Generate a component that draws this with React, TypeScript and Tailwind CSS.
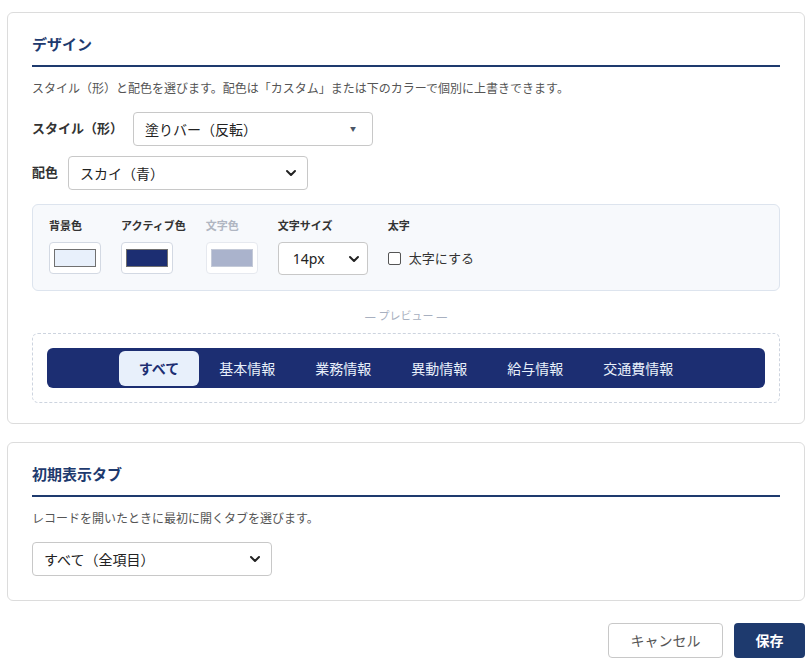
import { ChevronDown } from "lucide-react";

const tabs = ["すべて", "基本情報", "業務情報", "異動情報", "給与情報", "交通費情報"];

const swatches = [
  { label: "背景色", color: "bg-[#e8f0fb]", disabled: false },
  { label: "アクティブ色", color: "bg-[#1c2e72]", disabled: false },
  { label: "文字色", color: "bg-[#aab3cc]", disabled: true },
];

const SectionTitle = ({ children }: { children: string }) => (
  <h2 className="border-b-2 border-[#1e3a6e] pb-[9px] text-[15px] leading-6 font-bold text-[#1e3a6e]">
    {children}
  </h2>
);

const Select = ({
  value,
  width,
  arrow = "chevron",
}: {
  value: string;
  width: string;
  arrow?: "chevron" | "triangle";
}) => (
  <div
    className={`${width} flex h-[34px] items-center justify-between rounded-[4px] border border-[#c8c8c8] bg-white pl-[11px] pr-[8px] text-[14px] text-[#222]`}
  >
    <span>{value}</span>
    {arrow === "chevron" ? (
      <ChevronDown size={16} strokeWidth={3} className="text-[#222]" />
    ) : (
      <span className="mr-[8px] text-[6px] text-[#4a5566]">▼</span>
    )}
  </div>
);

export default function App() {
  return (
    <div
      className="min-h-screen bg-white px-[7px] pt-[12px] text-[#333]"
      style={{ fontFamily: '"Noto Sans", "Noto Sans CJK JP", sans-serif' }}
    >
      <section className="rounded-md border border-[#dcdcdc] px-6 pt-[19px] pb-5">
        <SectionTitle>デザイン</SectionTitle>
        <p className="mt-[13px] text-[12px] leading-[18px] text-[#555]">
          スタイル（形）と配色を選びます。配色は「カスタム」または下のカラーで個別に上書きできます。
        </p>

        <div className="mt-[14px] flex items-center gap-2.5">
          <span className="text-[13px] font-bold">スタイル（形）</span>
          <Select value="塗りバー（反転）" width="w-[240px]" arrow="triangle" />
        </div>
        <div className="mt-[10px] flex items-center gap-2.5">
          <span className="text-[13px] font-bold">配色</span>
          <Select value="スカイ（青）" width="w-[240px]" />
        </div>

        <div className="mt-[14px] flex gap-5 rounded-md border border-[#dde4ee] bg-[#f7f9fc] px-4 pt-[13px] pb-[15px]">
          {swatches.map((s) => (
            <div key={s.label} className="flex flex-col gap-2">
              <span
                className={`text-[11px] leading-4 font-bold ${s.disabled ? "text-[#b0b6c2]" : "text-[#333]"}`}
              >
                {s.label}
              </span>
              <div
                className={`flex h-[32px] w-[52px] items-center justify-center rounded-[4px] border bg-white ${s.disabled ? "border-[#e6e9ef]" : "border-[#d3d9e3]"}`}
              >
                <div
                  className={`h-[18px] w-[42px] border ${s.color} ${s.disabled ? "border-[#c4cad8]" : "border-[#707070]"}`}
                />
              </div>
            </div>
          ))}
          <div className="flex flex-col gap-2">
            <span className="text-[11px] leading-4 font-bold">文字サイズ</span>
            <div className="flex h-[33px] w-[90px] items-center justify-between rounded-[4px] border border-[#c8c8c8] bg-white pl-[14px] pr-[5px] text-[14px] text-[#222]">
              <span>14px</span>
              <ChevronDown size={16} strokeWidth={3} />
            </div>
          </div>
          <div className="flex flex-col gap-2">
            <span className="text-[11px] leading-4 font-bold">太字</span>
            <label className="flex h-[33px] items-center gap-[8px] text-[13px] text-[#333]">
              <span className="h-[13px] w-[13px] rounded-[2px] border border-[#555] bg-white" />
              太字にする
            </label>
          </div>
        </div>

        <p className="mt-[17px] text-center text-[11px] leading-4 text-[#a8b0c0]">— プレビュー —</p>

        <div className="mt-[9px] rounded-md border border-dashed border-[#cdd4df] p-[14px]">
          <div className="flex h-[40px] items-center justify-center rounded-md bg-[#1c2e72] px-[2px]">
            {tabs.map((t, i) => (
              <div
                key={t}
                className={`flex h-[35px] items-center rounded-md px-5 text-[14px] ${i === 0 ? "bg-[#e8f0fb] font-bold text-[#1c2e72]" : "text-[#e8f0fb]"}`}
              >
                {t}
              </div>
            ))}
          </div>
        </div>
      </section>

      <section className="mt-[18px] rounded-md border border-[#dcdcdc] px-6 pt-[19px] pb-[24px]">
        <SectionTitle>初期表示タブ</SectionTitle>
        <p className="mt-[13px] text-[12px] leading-[18px] text-[#555]">
          レコードを開いたときに最初に開くタブを選びます。
        </p>
        <div className="mt-[14px]">
          <Select value="すべて（全項目）" width="w-[240px]" />
        </div>
      </section>

      <div className="mt-[22px] flex justify-end gap-[11px]">
        <button className="h-[35px] w-[115px] rounded-[4px] border border-[#c8c8c8] bg-white text-[14px] text-[#555]">
          キャンセル
        </button>
        <button className="h-[35px] w-[71px] rounded-[4px] bg-[#1e3a6e] text-[14px] font-bold text-white">
          保存
        </button>
      </div>
    </div>
  );
}
